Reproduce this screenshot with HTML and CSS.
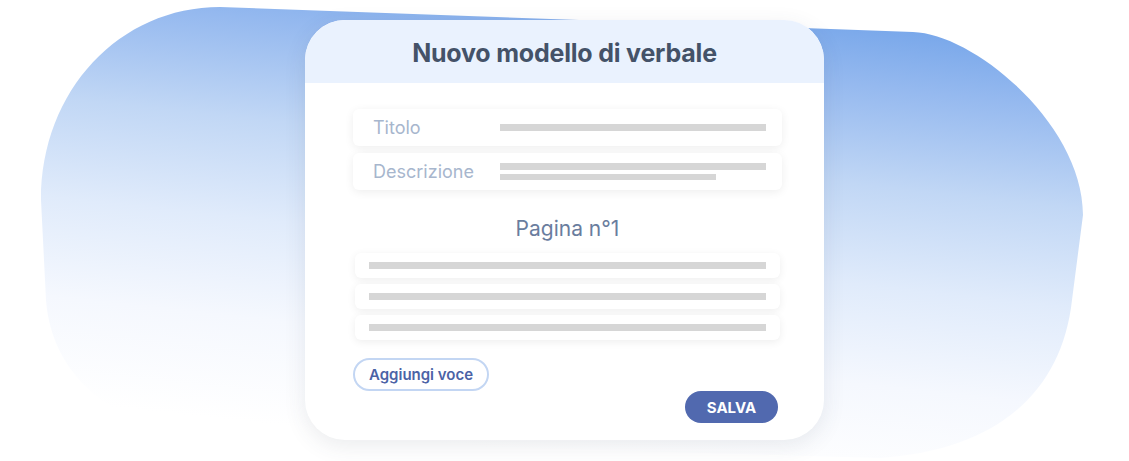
FILE: index.html
```html
<!DOCTYPE html>
<html lang="it">
<head>
    <meta charset="UTF-8">
    <meta name="viewport" content="width=device-width, initial-scale=1.0">
    <title>Nuovo modello di verbale</title>
    <link rel="stylesheet" href="styles.css">
</head>
<body>
    <div class="scena">
        <!-- Sfondo sfumato dietro la card -->
        <svg class="sfondo" width="1129" height="461" viewBox="0 0 1129 461">
            <defs>
                <linearGradient id="sfumatura" gradientUnits="userSpaceOnUse" x1="650" y1="0" x2="600" y2="460">
                    <stop offset="0" stop-color="#78a7ea"/>
                    <stop offset="0.133" stop-color="#95b9ef"/>
                    <stop offset="0.348" stop-color="#c1d7f5"/>
                    <stop offset="0.563" stop-color="#e0ebfb"/>
                    <stop offset="0.777" stop-color="#f5f8fe"/>
                    <stop offset="1" stop-color="#ffffff"/>
                </linearGradient>
            </defs>
            <path d="M220,7 L913,32 C975,34 1083,125 1083,215 L1072,300 C1062,390 1000,450 880,458 L230,440 C120,435 52,380 46,300 L41,200 C41,90 120,7 220,7 Z" fill="url(#sfumatura)"/>
        </svg>

        <div class="card">
            <div class="card-header">
                <h1>Nuovo modello di verbale</h1>
            </div>
            <div class="card-body">
                <div class="campo">
                    <span class="etichetta">Titolo</span>
                    <div class="righe">
                        <div class="riga"></div>
                    </div>
                </div>
                <div class="campo">
                    <span class="etichetta">Descrizione</span>
                    <div class="righe">
                        <div class="riga"></div>
                        <div class="riga corta"></div>
                    </div>
                </div>

                <h2 class="pagina">Pagina n°1</h2>

                <div class="voci">
                    <div class="voce"><div class="riga"></div></div>
                    <div class="voce"><div class="riga"></div></div>
                    <div class="voce"><div class="riga"></div></div>
                </div>

                <div class="azioni">
                    <button class="aggiungi">Aggiungi voce</button>
                    <button class="salva">SALVA</button>
                </div>
            </div>
        </div>
    </div>
</body>
</html>
```

FILE: styles.css
```css
body {
    margin: 0;
    background-color: #ffffff;
    font-family: Inter, "Noto Sans", sans-serif;
}

.scena {
    position: relative;
    width: 1129px;
    height: 461px;
    overflow: hidden;
    display: flex;
    justify-content: center;
    align-items: flex-start;
    padding-top: 20px;
    box-sizing: border-box;
}

.sfondo {
    position: absolute;
    top: 0;
    left: 0;
}

.card {
    position: relative; /* sopra lo sfondo */
    width: 519px;
    height: 420px;
    background-color: #ffffff;
    border-radius: 40px;
    overflow: hidden;
    box-shadow: 0 6px 22px rgba(60, 70, 90, 0.10);
}

.card-header {
    height: 63px;
    display: flex;
    align-items: center;
    justify-content: center;
    background-color: #eaf2fe;
}

.card-header h1 {
    margin: 2px 0 0;
    font-size: 25px;
    font-weight: 700;
    color: #445268;
    letter-spacing: -0.2px;
}

.card-body {
    padding: 26px 42px 0 48px;
}

.campo {
    height: 37px;
    display: flex;
    align-items: center;
    padding: 0 16px 0 20px;
    margin-bottom: 7px;
    background-color: #ffffff;
    border-radius: 6px;
    box-shadow: 0 2px 10px rgba(0, 0, 0, 0.07);
}

.etichetta {
    width: 127px;
    font-size: 18px;
    color: #a7b6cd;
}

.righe {
    flex: 1;
    display: flex;
    flex-direction: column;
    gap: 4px;
}

.riga {
    height: 7px;
    background-color: #d6d6d6;
}

.riga.corta {
    width: 216px;
    height: 6px;
}

.pagina {
    margin: 27px 0 12px;
    text-align: center;
    font-size: 21px;
    font-weight: 400;
    line-height: 24px;
    color: #6a7d9e;
}

.voci {
    display: flex;
    flex-direction: column;
    gap: 6px;
    padding: 0 2px;
}

.voce {
    height: 25px;
    display: flex;
    align-items: center;
    padding: 0 14px;
    background-color: #ffffff;
    border-radius: 6px;
    box-shadow: 0 2px 8px rgba(0, 0, 0, 0.07);
}

.voce .riga {
    flex: 1;
}

.azioni {
    position: relative;
    height: 81px;
    margin-top: 18px;
}

.aggiungi {
    height: 33px;
    padding: 0 14px;
    background-color: #ffffff;
    border: 2px solid #c3d6f3;
    border-radius: 17px;
    font-family: Inter, "Noto Sans", sans-serif;
    font-size: 15px;
    font-weight: 600;
    color: #4b63a6;
}

.salva {
    position: absolute;
    right: 4px;
    top: 33px;
    width: 93px;
    height: 32px;
    border: none;
    border-radius: 16px;
    background-color: #5169af;
    font-family: Inter, "Noto Sans", sans-serif;
    font-size: 15px;
    font-weight: 700;
    color: #ffffff;
}
```
